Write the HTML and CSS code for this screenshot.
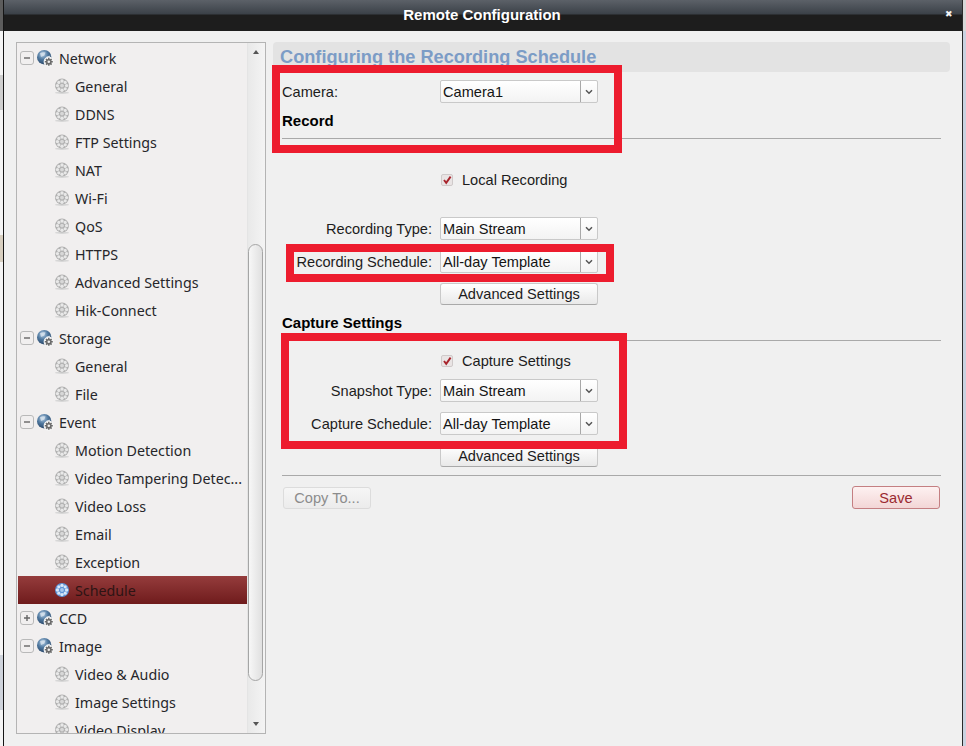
FILE: index.html
```html
<!DOCTYPE html>
<html lang="en">
<head>
<meta charset="utf-8">
<title>Remote Configuration</title>
<link rel="stylesheet" href="styles.css">
</head>
<body>
<svg class="defs" width="0" height="0" aria-hidden="true">
  <defs>
    <radialGradient id="ball" cx="0.4" cy="0.3" r="0.8">
      <stop offset="0" stop-color="#b4cde4"/>
      <stop offset="0.45" stop-color="#4f789f"/>
      <stop offset="1" stop-color="#223c5c"/>
    </radialGradient>
    <symbol id="gear" viewBox="0 0 16 16">
      <ellipse cx="8" cy="14.8" rx="7" ry="1.1" fill="#d6d6d6"/>
      <circle cx="8" cy="7.6" r="7" fill="#b0b0b0"/>
      <g fill="#e8e8e8">
        <circle cx="8" cy="3" r="1.7"/><circle cx="8" cy="12.2" r="1.7"/>
        <circle cx="3.4" cy="7.6" r="1.7"/><circle cx="12.6" cy="7.6" r="1.7"/>
        <circle cx="4.8" cy="4.4" r="1.6"/><circle cx="11.2" cy="4.4" r="1.6"/>
        <circle cx="4.8" cy="10.8" r="1.6"/><circle cx="11.2" cy="10.8" r="1.6"/>
      </g>
      <circle cx="8" cy="7.6" r="1.9" fill="#d8d8d8"/>
    </symbol>
    <symbol id="gear-on" viewBox="0 0 16 16">
      <circle cx="8" cy="8" r="7" fill="#5d93d6"/>
      <g fill="#d7e7f8">
        <circle cx="8" cy="3.4" r="1.7"/><circle cx="8" cy="12.6" r="1.7"/>
        <circle cx="3.4" cy="8" r="1.7"/><circle cx="12.6" cy="8" r="1.7"/>
        <circle cx="4.8" cy="4.8" r="1.6"/><circle cx="11.2" cy="4.8" r="1.6"/>
        <circle cx="4.8" cy="11.2" r="1.6"/><circle cx="11.2" cy="11.2" r="1.6"/>
      </g>
      <circle cx="8" cy="8" r="1.9" fill="#a6c8ee"/>
    </symbol>
    <symbol id="globe" viewBox="0 0 17 17">
      <circle cx="7.2" cy="7.2" r="7.2" fill="url(#ball)"/>
      <path d="M3 3.2 Q6 1.6 8.5 2.6 L7.4 5.6 L4 7 Z M9.4 6.5 L13.4 5.5 L12.5 8 L9.6 9 Z" fill="#dfe8f0" opacity="0.75"/>
      <circle cx="11.8" cy="11.8" r="5.2" fill="#f4f4f4"/>
      <g stroke="#6a6a6a" stroke-width="1.5">
        <path d="M11.8 7.8 V15.8 M7.8 11.8 H15.8 M9 9 L14.6 14.6 M14.6 9 L9 14.6"/>
      </g>
      <circle cx="11.8" cy="11.8" r="2.8" fill="#6a6a6a"/>
      <circle cx="11.8" cy="11.8" r="1.3" fill="#f0f0f0"/>
    </symbol>
    <symbol id="minus" viewBox="0 0 14 14">
      <rect x="0.5" y="0.5" width="13" height="13" rx="2.5" fill="#f1efef" stroke="#b9b9b9"/>
      <path d="M4 7 H10" stroke="#666" stroke-width="1.4"/>
    </symbol>
    <symbol id="plus" viewBox="0 0 14 14">
      <rect x="0.5" y="0.5" width="13" height="13" rx="2.5" fill="#f1efef" stroke="#b9b9b9"/>
      <path d="M4 7 H10 M7 4 V10" stroke="#666" stroke-width="1.4"/>
    </symbol>
    <symbol id="caret" viewBox="0 0 8 6">
      <path d="M1 1.2 L4 4.2 L7 1.2" fill="none" stroke="#555" stroke-width="1.5"/>
    </symbol>
    <symbol id="check" viewBox="0 0 12 12">
      <rect x="0.5" y="0.5" width="11" height="11" rx="1.5" fill="#e9e4e4" stroke="#cfcaca"/>
      <path d="M3 6 L5.2 8.8 L9.6 2.6" fill="none" stroke="#a8242c" stroke-width="1.9"/>
    </symbol>
  </defs>
</svg>

<div class="screen">
  <div class="edge-left"></div>
  <div class="window">
    <header class="titlebar">
      <span class="title">Remote Configuration</span>
      <span class="close">✖</span>
    </header>
    <div class="content">
      <aside class="tree-panel">
        <ul class="tree">
          <li class="node"><svg class="exp"><use href="#minus"/></svg><svg class="globe"><use href="#globe"/></svg>Network</li>
          <li class="leaf"><svg class="gear"><use href="#gear"/></svg>General</li>
          <li class="leaf"><svg class="gear"><use href="#gear"/></svg>DDNS</li>
          <li class="leaf"><svg class="gear"><use href="#gear"/></svg>FTP Settings</li>
          <li class="leaf"><svg class="gear"><use href="#gear"/></svg>NAT</li>
          <li class="leaf"><svg class="gear"><use href="#gear"/></svg>Wi-Fi</li>
          <li class="leaf"><svg class="gear"><use href="#gear"/></svg>QoS</li>
          <li class="leaf"><svg class="gear"><use href="#gear"/></svg>HTTPS</li>
          <li class="leaf"><svg class="gear"><use href="#gear"/></svg>Advanced Settings</li>
          <li class="leaf"><svg class="gear"><use href="#gear"/></svg>Hik-Connect</li>
          <li class="node"><svg class="exp"><use href="#minus"/></svg><svg class="globe"><use href="#globe"/></svg>Storage</li>
          <li class="leaf"><svg class="gear"><use href="#gear"/></svg>General</li>
          <li class="leaf"><svg class="gear"><use href="#gear"/></svg>File</li>
          <li class="node"><svg class="exp"><use href="#minus"/></svg><svg class="globe"><use href="#globe"/></svg>Event</li>
          <li class="leaf"><svg class="gear"><use href="#gear"/></svg>Motion Detection</li>
          <li class="leaf"><svg class="gear"><use href="#gear"/></svg>Video Tampering Detec...</li>
          <li class="leaf"><svg class="gear"><use href="#gear"/></svg>Video Loss</li>
          <li class="leaf"><svg class="gear"><use href="#gear"/></svg>Email</li>
          <li class="leaf"><svg class="gear"><use href="#gear"/></svg>Exception</li>
          <li class="leaf selected"><svg class="gear"><use href="#gear-on"/></svg>Schedule</li>
          <li class="node"><svg class="exp"><use href="#plus"/></svg><svg class="globe"><use href="#globe"/></svg>CCD</li>
          <li class="node"><svg class="exp"><use href="#minus"/></svg><svg class="globe"><use href="#globe"/></svg>Image</li>
          <li class="leaf"><svg class="gear"><use href="#gear"/></svg>Video &amp; Audio</li>
          <li class="leaf"><svg class="gear"><use href="#gear"/></svg>Image Settings</li>
          <li class="leaf"><svg class="gear"><use href="#gear"/></svg>Video Display</li>
        </ul>
        <div class="scrollbar">
          <span class="arrow-up"></span>
          <span class="thumb"></span>
          <span class="arrow-down"></span>
        </div>
      </aside>

      <main class="main">
        <h1 class="heading">Configuring the Recording Schedule</h1>
        <div class="form">
          <div class="row row-camera">
            <label class="label label-left">Camera:</label>
            <div class="select"><span class="value">Camera1</span><span class="drop"><svg class="caret"><use href="#caret"/></svg></span></div>
          </div>
          <h2 class="section section-record">Record</h2>
          <hr class="rule rule-record">
          <div class="row row-local">
            <span class="label"></span>
            <span class="checkline"><svg class="check"><use href="#check"/></svg>Local Recording</span>
          </div>
          <div class="row row-type">
            <label class="label">Recording Type:</label>
            <div class="select"><span class="value">Main Stream</span><span class="drop"><svg class="caret"><use href="#caret"/></svg></span></div>
          </div>
          <div class="row row-next">
            <label class="label">Recording Schedule:</label>
            <div class="select"><span class="value">All-day Template</span><span class="drop"><svg class="caret"><use href="#caret"/></svg></span></div>
          </div>
          <div class="row row-next">
            <span class="label"></span>
            <button class="btn btn-wide">Advanced Settings</button>
          </div>
          <h2 class="section section-capture">Capture Settings</h2>
          <hr class="rule rule-capture">
          <div class="row row-capcheck">
            <span class="label"></span>
            <span class="checkline"><svg class="check"><use href="#check"/></svg>Capture Settings</span>
          </div>
          <div class="row row-next">
            <label class="label">Snapshot Type:</label>
            <div class="select"><span class="value">Main Stream</span><span class="drop"><svg class="caret"><use href="#caret"/></svg></span></div>
          </div>
          <div class="row row-next">
            <label class="label">Capture Schedule:</label>
            <div class="select"><span class="value">All-day Template</span><span class="drop"><svg class="caret"><use href="#caret"/></svg></span></div>
          </div>
          <div class="row row-next">
            <span class="label"></span>
            <button class="btn btn-wide">Advanced Settings</button>
          </div>
          <hr class="rule rule-footer">
          <div class="footer">
            <button class="btn btn-copy">Copy To...</button>
            <button class="btn btn-save">Save</button>
          </div>
        </div>
      </main>
    </div>
  </div>
  <div class="edge-right"></div>

  <div class="mark mark-camera"></div>
  <div class="mark mark-schedule"></div>
  <div class="mark mark-capture"></div>
</div>
</body>
</html>
```

FILE: styles.css
```css
* { box-sizing: border-box; }
html, body { margin: 0; padding: 0; }
body {
  width: 966px;
  height: 746px;
  overflow: hidden;
  background: #f0f0f0;
  font-family: "Liberation Sans", Arial, sans-serif;
  font-size: 14.6px;
  color: #1c1c1c;
}
.defs { position: absolute; }
.screen { position: relative; display: flex; width: 966px; height: 746px; }

.edge-left {
  width: 4px;
  flex: none;
  border-right: 1px solid #151515;
  background: linear-gradient(180deg, #5c5c5c 0, #5c5c5c 31px, #f4f4f4 31px, #f4f4f4 75px, #cfcfcf 75px, #cfcfcf 110px, #f4f4f4 110px, #f4f4f4 235px, #d8cfc0 235px, #d8cfc0 262px, #f4f4f4 262px, #f4f4f4 655px, #cfd4dc 655px, #cfd4dc 710px, #f4f4f4 710px);
}
.edge-right {
  width: 4px;
  flex: none;
  border-left: 1px solid #2a2a2a;
  background: linear-gradient(180deg, #d8d8d8 0, #d8d8d8 31px, #c9d2e0 31px);
}

.window { flex: 1; min-width: 0; display: flex; flex-direction: column; background: #f0f0f0; }

.titlebar {
  position: relative;
  height: 31px;
  flex: none;
  display: flex;
  align-items: center;
  justify-content: center;
  padding-bottom: 2px;
  background: linear-gradient(180deg, #5c6168 0, #3b4148 14px, #1d1d1d 15px, #1d1d1d 31px);
}
.title { color: #fff; font-weight: 700; font-size: 15px; margin-left: -2px; }
.close { position: absolute; left: 941px; top: 8px; color: #f4f4f4; font-size: 9px; line-height: 12px; font-family: "DejaVu Sans", sans-serif; }

.content { flex: 1; min-height: 0; display: flex; padding: 11px 12px 11px 12px; gap: 7px; align-items: flex-start; }

/* tree */
.tree-panel {
  position: relative;
  flex: none;
  width: 250px;
  height: 692px;
  border: 1px solid #b4b4b4;
  background: #f1efef;
  overflow: hidden;
}
.tree {
  list-style: none;
  margin: 0;
  padding: 1px 0 0 1px;
  width: 231px;
  height: 690px;
  overflow: hidden;
  font-family: "Noto Sans", "Open Sans", sans-serif;
  font-size: 14.25px;
  color: #26262a;
}
.node, .leaf { display: flex; align-items: center; height: 28px; white-space: nowrap; }
.node { padding-left: 2px; }
.leaf { padding-left: 36px; }
.exp { width: 14px; height: 14px; flex: none; }
.globe { width: 17px; height: 17px; flex: none; margin-left: 3px; margin-right: 5px; }
.gear { width: 16px; height: 16px; flex: none; margin-right: 5px; }
.selected { background: linear-gradient(180deg, #953c3c 0, #6f1b1c 100%); color: #2d1414; }

.scrollbar {
  position: absolute;
  top: 0;
  right: 0;
  width: 18px;
  height: 690px;
  border-left: 1px solid #e4e4e4;
  background: linear-gradient(90deg, #e9e9e9, #f4f4f4);
}
.thumb {
  position: absolute;
  left: 0;
  top: 201px;
  width: 15px;
  height: 437px;
  border: 1px solid #a5a5a5;
  border-radius: 8px;
  background: linear-gradient(90deg, #f7f7f7, #e0e0e0);
}
.arrow-up, .arrow-down {
  position: absolute;
  left: 5px;
  width: 0;
  height: 0;
  border-left: 3px solid transparent;
  border-right: 3px solid transparent;
}
.arrow-up { top: 7px; border-bottom: 4px solid #555; }
.arrow-down { bottom: 7px; border-top: 4px solid #555; }

/* main */
.main { flex: 1; min-width: 0; }
.heading {
  height: 30px;
  margin: 0;
  padding: 5px 0 0 7px;
  background: #e3e3e3;
  border-radius: 4px;
  font-size: 18.2px;
  line-height: 20px;
  font-weight: 700;
  color: #7c9cc6;
}
.form { padding: 0 9px; }
.row { display: flex; align-items: center; gap: 8px; }
.label { flex: none; width: 150px; text-align: right; white-space: nowrap; }
.label-left { text-align: left; }
.row-camera { margin-top: 8px; }
.row-local { margin-top: 33px; height: 16px; }
.row-type { margin-top: 29px; }
.row-next { margin-top: 10px; }
.row-capcheck { margin-top: 12px; height: 16px; }

.select {
  display: flex;
  width: 158px;
  height: 23px;
  border: 1px solid #c9c9c9;
  border-radius: 2px;
  background: linear-gradient(180deg, #ffffff, #f3f3f3);
}
.value { flex: 1; padding-left: 2px; line-height: 22px; color: #141414; }
.drop { flex: none; width: 17px; display: flex; align-items: center; justify-content: center; border-left: 1px solid #a8a8a8; }
.caret { width: 8px; height: 6px; }

.section { margin: 0; font-size: 15px; line-height: 16px; font-weight: 700; color: #000; }
.section-record { margin-top: 10px; }
.section-capture { margin-top: 10px; }
.rule { margin: 0; border: 0; height: 1px; background: #a9a9a9; }
.rule-record { margin-top: 9px; }
.rule-capture { margin-top: 9px; }
.rule-footer { margin-top: 8px; }

.checkline { display: flex; align-items: center; padding-left: 1px; white-space: nowrap; }
.check { width: 12px; height: 12px; margin-right: 9px; flex: none; }

.btn {
  height: 22px;
  padding: 0;
  font-family: inherit;
  font-size: 14.6px;
  color: #1c1c1c;
  border: 1px solid #c9c9c9;
  border-bottom-color: #a9a9a9;
  border-radius: 3px;
  background: linear-gradient(180deg, #ffffff, #e9e9e9);
}
.btn-wide { width: 158px; }
.footer { display: flex; justify-content: space-between; align-items: flex-start; margin-top: 10px; padding: 0 1px; }
.btn-copy { width: 88px; margin-top: 1px; color: #8c8c8c; border-color: #dcdcdc; background: linear-gradient(180deg, #f6f6f6, #ececec); }
.btn-save { width: 88px; height: 23px; color: #9b2a30; border-color: #c47f82; background: linear-gradient(180deg, #fdf1f1, #f3d6d6); }

/* annotation frames, drawn over the page */
.mark { position: absolute; border: 8px solid #ed1c2e; }
.mark-camera { left: 272px; top: 65px; width: 350px; height: 88px; }
.mark-schedule { left: 286px; top: 244px; width: 328px; height: 38px; }
.mark-capture { left: 281px; top: 333px; width: 346px; height: 116px; }
```
